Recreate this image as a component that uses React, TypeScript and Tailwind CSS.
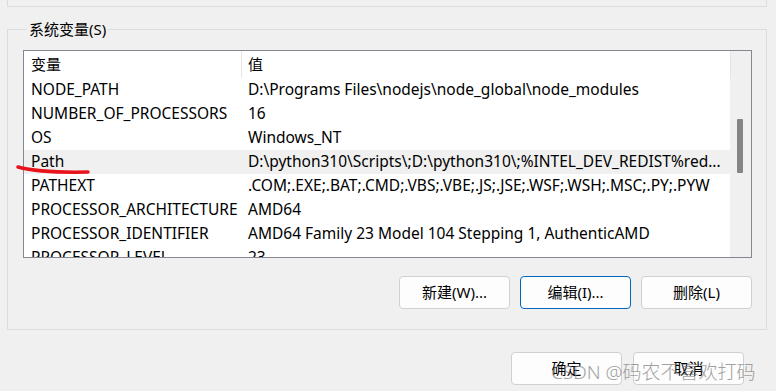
import React from 'react';

const rows: { name: string; value: string; selected?: boolean }[] = [
  { name: 'NODE_PATH', value: 'D:\\Programs Files\\nodejs\\node_global\\node_modules' },
  { name: 'NUMBER_OF_PROCESSORS', value: '16' },
  { name: 'OS', value: 'Windows_NT' },
  { name: 'Path', value: 'D:\\python310\\Scripts\\;D:\\python310\\;%INTEL_DEV_REDIST%red...', selected: true },
  { name: 'PATHEXT', value: '.COM;.EXE;.BAT;.CMD;.VBS;.VBE;.JS;.JSE;.WSF;.WSH;.MSC;.PY;.PYW' },
  { name: 'PROCESSOR_ARCHITECTURE', value: 'AMD64' },
  { name: 'PROCESSOR_IDENTIFIER', value: 'AMD64 Family 23 Model 104 Stepping 1, AuthenticAMD' },
  { name: 'PROCESSOR_LEVEL', value: '23' },
];

const font = { fontFamily: '"Noto Sans", "Noto Sans CJK SC", sans-serif' };

const Button: React.FC<{ label: string; focused?: boolean }> = ({ label, focused }) => (
  <button
    className={`h-[33px] w-[111px] rounded-[4px] bg-[#fdfdfd] text-[15px] text-black ${
      focused ? 'border border-[#0067c0]' : 'border border-[#d0d0d0]'
    }`}
  >
    {label}
  </button>
);

export default function App() {
  return (
    <div className="relative h-[391px] w-[776px] overflow-hidden bg-[#f0f0f0] text-black" style={font}>
      {/* bottom of the user variables group */}
      <div className="ml-[7px] h-[7px] w-[760px] border-x border-b border-[#dcdcdc]" />

      <fieldset className="mt-[12px] ml-[7px] w-[760px] border border-[#dcdcdc] pl-[15px] pr-[14px] pb-[20px]">
        <legend className="ml-[4px] px-[2px] text-[15px] leading-[20px]">系统变量(S)</legend>

        <div className="relative mt-[11px] flex h-[208px] w-[729px] border border-[#828790] bg-white">
          <div className="flex-1 overflow-hidden">
            <div className="flex h-[27px] items-center text-[15px]">
              <div className="flex h-full w-[218px] items-center border-r border-[#e5e5e5] pl-[7px]">变量</div>
              <div className="pl-[6px]">值</div>
            </div>
            {rows.map((r) => (
              <div
                key={r.name}
                className={`flex h-[24px] items-center whitespace-nowrap text-[15.5px] ${r.selected ? 'bg-[#f0f0f0]' : ''}`}
              >
                <div className="w-[218px] shrink-0 pl-[7px]">{r.name}</div>
                <div className="pl-[6px]">{r.value}</div>
              </div>
            ))}
          </div>
          {/* scrollbar */}
          <div className="flex w-[21px] flex-col bg-[#f0f0f0]">
            <div className="h-[27px] w-[1px] bg-[#e5e5e5]" />
            <div className="mt-[41px] ml-[7px] h-[54px] w-[6px] rounded-[1px] bg-[#858585]" />
          </div>
        </div>

        <div className="mt-[18px] flex justify-end gap-[10px]">
          <Button label="新建(W)..." />
          <Button label="编辑(I)..." focused />
          <Button label="删除(L)" />
        </div>
      </fieldset>

      <div className="mt-[22px] mr-[32px] flex justify-end gap-[11px]">
        <button className="h-[33px] w-[111px] rounded-[4px] border border-[#d0d0d0] bg-[#fdfdfd] text-[15px]">确定</button>
        <button className="h-[33px] w-[111px] rounded-[4px] border border-[#d0d0d0] bg-[#fdfdfd] text-[15px]">取消</button>
      </div>

      {/* red annotation under Path */}
      <svg className="pointer-events-none absolute left-0 top-0" width="776" height="391">
        <path d="M18 167 Q40 173 88 172" fill="none" stroke="#e8141b" strokeWidth="3.5" strokeLinecap="round" />
      </svg>

      {/* watermark */}
      <div
        className="pointer-events-none absolute left-[551px] top-[361px] whitespace-nowrap text-[19px] leading-[22px] text-[#7a7a7a] opacity-70"
        style={{ fontFamily: '"Noto Sans", "Noto Sans CJK SC", sans-serif', fontWeight: 300 }}
      >
        CSDN @码农不喜欢打码
      </div>
    </div>
  );
}
